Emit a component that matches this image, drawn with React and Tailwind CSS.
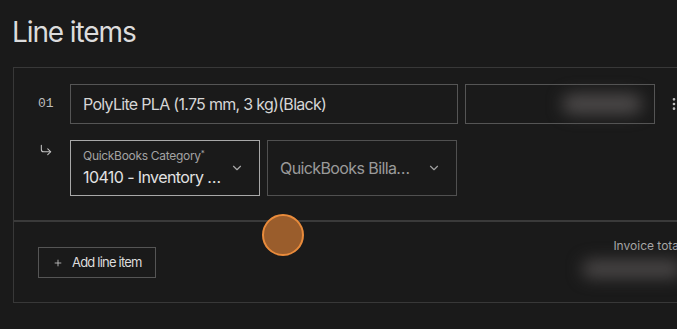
import { ChevronDown, CornerDownRight, EllipsisVertical, Plus } from "lucide-react";

const App = () => {
  return (
    <div className="relative h-[329px] w-[677px] overflow-hidden bg-[#1a1a1a] font-['Inter',sans-serif]">
      <h1 className="pl-[12px] pt-[16px] text-[28px] leading-[32px] tracking-[-1.1px] text-[#dcdcdc]">Line items</h1>

      <div className="ml-[13px] mt-[19px] w-[694px] border border-[#383838]">
        <div className="px-[24px] pt-[16px] pb-[24px]">
          {/* first line item */}
          <div className="flex items-center">
            <div className="w-[32px] font-['Liberation_Mono',monospace] text-[13px] text-[#bdbdbd]">01</div>
            <div className="flex h-[40px] w-[388px] items-center border border-[#555] pl-[12px] text-[16px] tracking-[-0.7px] text-[#d6d6d6]">
              PolyLite PLA (1.75 mm, 3 kg)(Black)
            </div>
            <div className="ml-[7px] flex h-[40px] w-[190px] items-center justify-end border border-[#555] pr-[12px]">
              <div className="h-[20px] w-[80px] rounded-full bg-[#4d4a4a] blur-[8px]" />
            </div>
            <button className="ml-auto text-[#bdbdbd]">
              <EllipsisVertical size={16} />
            </button>
          </div>

          {/* accounting row */}
          <div className="mt-[16px] flex items-start">
            <div className="w-[32px] pl-[1px] pt-[3px] text-[#c4c4c4]">
              <CornerDownRight size={14} strokeWidth={1.8} />
            </div>
            <div className="flex h-[56px] w-[190px] items-center border border-[#a8a8a8] pl-[12px] pr-[15px]">
              <div className="flex-1 min-w-0">
                <div className="text-[12px] leading-[16px] tracking-[-0.3px] text-[#a3a3a3]">
                  QuickBooks Category<sup className="text-[8px]">*</sup>
                </div>
                <div className="mt-[2px] whitespace-nowrap text-[16px] leading-[22px] tracking-[-0.6px] text-[#e2e2e2]">10410 - Inventory …</div>
              </div>
              <ChevronDown size={14} className="text-[#a8a8a8]" />
            </div>
            <div className="ml-[7px] flex h-[56px] w-[190px] items-center border border-[#505050] pl-[12px] pr-[15px]">
              <div className="flex-1 whitespace-nowrap text-[16px] tracking-[-0.6px] text-[#9a9a9a]">QuickBooks Billa…</div>
              <ChevronDown size={14} className="text-[#a0a0a0]" />
            </div>
          </div>
        </div>

        <div className="h-[2px] bg-[#3a3a3a]" />

        {/* footer */}
        <div className="flex items-start px-[24px] pt-[16px] pb-[24px]">
          <button className="mt-[9px] flex h-[31px] items-center gap-[9px] border border-[#555] pl-[14px] pr-[13px] text-[13px] tracking-[-0.8px] text-[#dcdcdc]">
            <Plus size={10} strokeWidth={2} className="text-[#c8c8c8]" />
            Add line item
          </button>
          <div className="ml-auto flex flex-col items-end">
            <div className="text-[12px] leading-[16px] text-[#a8a8a8]">Invoice total</div>
            <div className="mt-[6px] h-[18px] w-[100px] rounded-full bg-[#4a4747] blur-[8px]" />
          </div>
        </div>
      </div>

      {/* click indicator */}
      <div className="absolute left-[262px] top-[214px] h-[42px] w-[42px] rounded-full border-2 border-[#e98b3b] bg-[#9a5d2c]" />
    </div>
  );
};

export default App;
